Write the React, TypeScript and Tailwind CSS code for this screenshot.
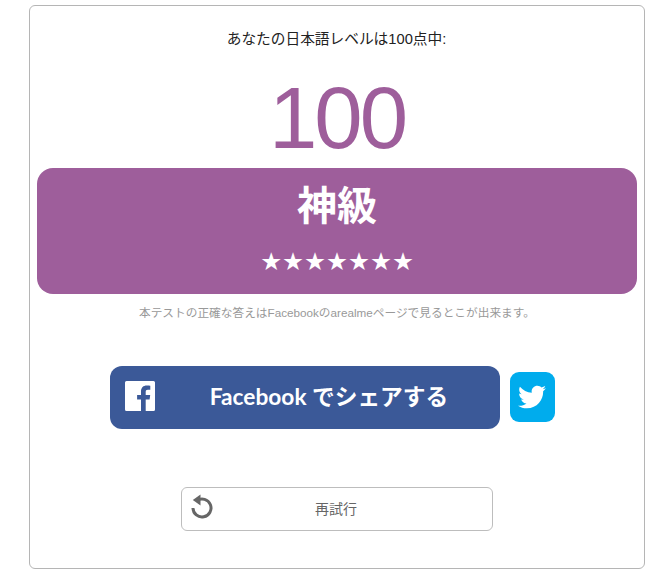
import { FaTwitter } from "react-icons/fa";

const cjk = "font-['Liberation_Sans','Noto_Sans_CJK_JP',sans-serif]";

export default function App() {
  return (
    <div className="w-[672px] h-[578px] bg-white pt-[5px] pl-[29px] overflow-hidden">
      <div className={`w-[616px] h-[564px] border border-[#b5b5b5] rounded-[6px] bg-white flex flex-col items-center px-[7px] ${cjk}`}>
        <p className="mt-[23px] h-[21px] leading-[21px] text-[14.7px] text-[#222222] text-center pr-[1px]">あなたの日本語レベルは100点中:</p>
        <div className="mt-[18px] h-[100px] leading-[100px] text-[87px] tracking-[-3px] text-[#9e5e9b] text-center">100</div>
        <div className="w-[600px] h-[126px] bg-[#9e5e9b] rounded-[16px] flex flex-col items-center text-white shrink-0">
          <div className="mt-[12px] h-[52px] leading-[52px] text-[40px] font-bold">神級</div>
          <div className="mt-[16px] h-[28px] leading-[28px] text-[24.5px] font-['DejaVu_Sans',sans-serif]">★★★★★★★</div>
        </div>
        <p className="mt-[10px] h-[18px] leading-[18px] text-[11.7px] text-[#999999] text-center">本テストの正確な答えはFacebookのarealmeページで見るとこが出来ます。</p>
        <div className="mt-[44px] flex items-start gap-[10px] ml-[-10px]">
          <div className="relative w-[390px] h-[63px] bg-[#3b5998] rounded-[12px] flex items-center justify-center text-white text-[22.7px] font-bold font-['Lato','Noto_Sans_CJK_JP',sans-serif] pl-[49px]">
            <svg className="absolute left-[15px] top-[15px]" width="30" height="30" viewBox="0 0 30 30" aria-hidden="true">
              <path fill="#ffffff" d="M1.5 0h27A1.5 1.5 0 0 1 30 1.5v27a1.5 1.5 0 0 1-1.5 1.5h-7.8V18.4h3.9l.6-4.5h-4.5V11c0-1.3.4-2.2 2.2-2.2h2.4v-4c-.4-.1-1.8-.2-3.5-.2-3.5 0-5.800 2.100-5.800 6v3.300h-3.900v4.500h3.900V30H1.500A1.500 1.500 0 0 1 0 28.500v-27A1.500 1.500 0 0 1 1.500 0z" />
            </svg>
            <span className="mt-[-1px]">Facebook でシェアする</span>
          </div>
          <div className="mt-[6px] w-[45px] h-[50px] bg-[#00aced] rounded-[9px] flex items-center justify-center">
            <FaTwitter className="text-white w-[28px] h-[28px]" />
          </div>
        </div>
        <div className="relative mt-[58px] w-[312px] h-[44px] border border-[#bdbdbd] rounded-[6px] flex items-center justify-center text-[14px] text-[#666666]">
          <svg className="absolute left-[9px] top-[6px]" width="22" height="26" viewBox="0 0 22 26" fill="none" aria-hidden="true">
            <path d="M6 6.500A9 9 0 1 1 2 14" stroke="#666666" strokeWidth="3" strokeLinecap="butt" />
            <path d="M9.500 0.500V11.500L1.800 6z" fill="#666666" />
          </svg>
          <span className="ml-[-2px]">再試行</span>
        </div>
      </div>
    </div>
  );
}
